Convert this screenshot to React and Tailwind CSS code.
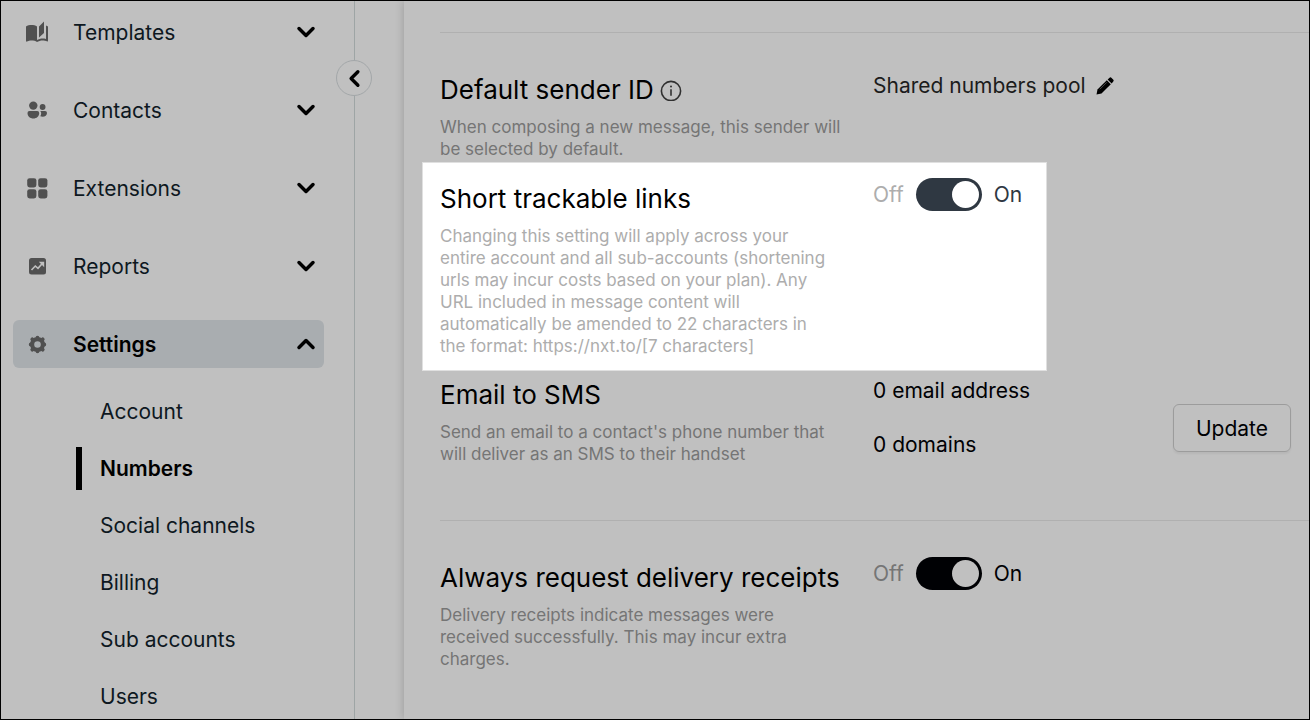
import { useState } from "react";
import { ChevronDown, ChevronLeft, ChevronUp } from "lucide-react";
import { MdAutoStories } from "react-icons/md";

function ContactsIcon() {
  return (
    <svg width="24" height="24" viewBox="0 0 24 24" fill="currentColor">
      <circle cx="8.3" cy="7.6" r="4.2" />
      <circle cx="17.6" cy="9" r="2.9" />
      <path d="M4.600 13h7.600a2 2 0 0 1 2 2c0 3.300-2.500 5.500-5.800 5.500S2.500 18.300 2.500 15a2 2 0 0 1 2.100-2z" />
      <path d="M15.200 13H20a2 2 0 0 1 2 2c0 2.400-1.900 3.700-4.300 3.700-.9 0-1.700-.2-2.400-.5.6-1 .9-2 .9-3.200 0-.8-.4-1.500-1-2z" />
    </svg>
  );
}

function ExtensionsIcon() {
  return (
    <svg width="24" height="24" viewBox="0 0 24 24" fill="currentColor">
      <rect x="2.2" y="2.2" width="9.2" height="9.2" rx="2.4" />
      <rect x="13.2" y="2.2" width="9.2" height="9.2" rx="2.4" />
      <rect x="2.2" y="13.2" width="9.2" height="9.2" rx="2.4" />
      <rect x="13.2" y="13.2" width="9.2" height="9.2" rx="2.4" />
    </svg>
  );
}

function ReportsIcon() {
  return (
    <svg width="24" height="24" viewBox="0 0 24 24">
      <rect x="4" y="4" width="17" height="16.5" rx="2.5" fill="currentColor" />
      <path
        d="M6.500 16l3.800-4 2.700 2.300 4.500-5"
        fill="none"
        stroke="#c0c0c0"
        strokeWidth="1.6"
      />
      <path d="M13.800 7.800h5.400v5.400z" fill="#c0c0c0" />
    </svg>
  );
}

function SettingsIcon() {
  return (
    <svg width="24" height="24" viewBox="0 0 24 24">
      <circle cx="12.500" cy="12.500" r="5.400" fill="none" stroke="currentColor" strokeWidth="4.200" />
      <g stroke="currentColor" strokeWidth="3.800" strokeLinecap="round">
        <path d="M12.500 5.700v.8M12.500 18.500v.8M5.700 12.500h.8M18.500 12.500h.8" />
        <path d="M7.300 7.300l.8.8M16.900 16.900l.8.8M7.300 17.700l.8-.8M16.900 8.100l.8-.8" />
      </g>
    </svg>
  );
}

function InfoIcon() {
  return (
    <svg width="22" height="22" viewBox="0 0 22 22" fill="none" stroke="currentColor">
      <circle cx="11" cy="12" r="9.600" strokeWidth="1.600" />
      <path d="M11 10.300v6.500" strokeWidth="1.600" />
      <circle cx="11" cy="7.600" r="1" fill="currentColor" stroke="none" />
    </svg>
  );
}

function PencilIcon() {
  return (
    <svg width="18" height="18" viewBox="0 0 18 18" fill="currentColor">
      <path d="M.5 17.500l1-5L10.800 3.200l4 4L5.500 16.500z" />
      <path d="M11.600 2.400L13.300.9a1.600 1.600 0 0 1 2.300 0l1.500 1.500a1.600 1.600 0 0 1 0 2.300l-1.500 1.700z" />
      <path d="M3.800 12.300l7-7" stroke="#5c5c5c" strokeWidth=".8" />
    </svg>
  );
}

const menu = [
  { name: "Templates", icon: <MdAutoStories size={27} /> },
  { name: "Contacts", icon: <ContactsIcon /> },
  { name: "Extensions", icon: <ExtensionsIcon /> },
  { name: "Reports", icon: <ReportsIcon /> },
  { name: "Settings", icon: <SettingsIcon />, open: true },
];

const subMenu = ["Account", "Numbers", "Social channels", "Billing", "Sub accounts", "Users"];

function Sidebar() {
  const [active, setActive] = useState("Numbers");

  return (
    <aside className="relative z-10 w-[354px] shrink-0 border-r border-[#9ea5a5] pt-[7px] pl-3 pr-[30px]">
      <button
        aria-label="Collapse menu"
        className="absolute top-[59px] right-[-18px] flex size-9 items-center justify-center rounded-full border border-[#a3a7a9] bg-[#c0c0c0] text-black"
      >
        <ChevronLeft size={27} strokeWidth={3} />
      </button>
      <nav>
        <div className="flex flex-col gap-[30px]">
          {menu.map((item) => (
            <button
              key={item.name}
              aria-expanded={!!item.open}
              className={
                item.open
                  ? "flex h-12 w-full items-center rounded-md bg-[#a9adb0] pl-3 pr-1 font-semibold text-black"
                  : "flex h-12 w-full items-center pl-3 pr-1 text-[#0e181f]"
              }
            >
              <span className="flex w-6 shrink-0 justify-center text-[#505050]">{item.icon}</span>
              <span className="ml-6 flex-1 text-left">{item.name}</span>
              <span className="text-black">
                {item.open ? (
                  <ChevronUp size={28} strokeWidth={3} />
                ) : (
                  <ChevronDown size={28} strokeWidth={3} />
                )}
              </span>
            </button>
          ))}
        </div>
        <ul className="mt-[22px] ml-[63px] flex flex-col gap-[14px]">
          {subMenu.map((name) => (
            <li key={name}>
              <a
                href="#"
                onClick={() => setActive(name)}
                className={
                  name === active
                    ? "flex h-[43px] items-center border-l-6 border-black pl-[18px] font-semibold text-black"
                    : "flex h-[43px] items-center border-l-6 border-transparent pl-[18px] text-[#0e181f]"
                }
              >
                {name}
              </a>
            </li>
          ))}
        </ul>
      </nav>
    </aside>
  );
}

function Toggle({ label, highlight }) {
  const [on, setOn] = useState(true);

  return (
    <div className="flex h-[27px] items-center gap-3">
      <span className={highlight ? "text-[#adadad]" : "text-[#757575]"}>Off</span>
      <input
        type="checkbox"
        role="switch"
        aria-label={label}
        checked={on}
        onChange={(e) => setOn(e.target.checked)}
        className={
          highlight
            ? "flex h-[33px] w-[66px] shrink-0 appearance-none rounded-full bg-[#2f3842] p-[3px] before:size-[27px] before:rounded-full before:bg-white before:content-[''] checked:justify-end"
            : "flex h-[33px] w-[66px] shrink-0 appearance-none rounded-full bg-[#000104] p-[3px] before:size-[27px] before:rounded-full before:bg-[#c0c0c0] before:content-[''] checked:justify-end"
        }
      />
      <span className={highlight ? "text-[#2f3842]" : "text-[#000104]"}>On</span>
    </div>
  );
}

function SettingText({ title, icon, text, highlight }) {
  return (
    <div className="w-[409px] shrink-0 whitespace-nowrap">
      <h2 className="flex items-center gap-[6px] text-[26px] leading-9 text-black">
        {title}
        {icon}
      </h2>
      <p
        className={
          highlight
            ? "mt-2 whitespace-pre text-[17px] leading-[22px] text-[#adadad]"
            : "mt-2 whitespace-pre text-[17px] leading-[22px] text-[#757575]"
        }
      >
        {text.join("\n")}
      </p>
    </div>
  );
}

export default function App() {
  return (
    <div className="flex min-h-screen overflow-hidden border border-black bg-[#c0c0c0] font-[Inter,sans-serif] text-[21px] leading-[27px]">
      <Sidebar />
      <main className="ml-[49px] min-w-0 flex-1 pt-[31px] pl-[18px] shadow-[0_0_9px_rgba(0,0,0,0.2)]">
        <section className="ml-[18px] flex gap-6 border-t border-[#b0b0b0] pt-[39px] pb-[2px]">
          <SettingText
            title="Default sender ID"
            icon={
              <span className="text-[#303030]">
                <InfoIcon />
              </span>
            }
            text={["When composing a new message, this sender will", "be selected by default."]}
          />
          <div className="flex h-[27px] items-center gap-[10px] text-[#1c1c1c]">
            Shared numbers pool
            <button aria-label="Edit sender" className="text-black">
              <PencilIcon />
            </button>
          </div>
        </section>

        <section className="flex w-[625px] gap-6 border border-[#e0e0e0] bg-white px-[17px] pt-[18px] pb-[13px]">
          <SettingText
            highlight
            title="Short trackable links"
            text={[
              "Changing this setting will apply across your",
              "entire account and all sub-accounts (shortening",
              "urls may incur costs based on your plan). Any",
              "URL included in message content will",
              "automatically be amended to 22 characters in",
              "the format: https://nxt.to/[7 characters]",
            ]}
          />
          <Toggle highlight label="Short trackable links" />
        </section>

        <section className="ml-[18px] flex gap-6 pt-[6px] pr-[18px] pb-[55px]">
          <SettingText
            title="Email to SMS"
            text={["Send an email to a contact's phone number that", "will deliver as an SMS to their handset"]}
          />
          <div className="flex flex-1 flex-col gap-[27px] text-[#000104]">
            <p>0 email address</p>
            <p>0 domains</p>
          </div>
          <button className="mt-[27px] h-12 w-[118px] shrink-0 self-start rounded-md border border-[#9c9c9c] text-[#000104] shadow-[0_2px_2px_rgba(0,0,0,0.05)]">
            Update
          </button>
        </section>

        <section className="ml-[18px] flex gap-6 border-t border-[#b0b0b0] pt-[39px]">
          <SettingText
            title="Always request delivery receipts"
            text={[
              "Delivery receipts indicate messages were",
              "received successfully. This may incur extra",
              "charges.",
            ]}
          />
          <Toggle label="Always request delivery receipts" />
        </section>
      </main>
    </div>
  );
}
